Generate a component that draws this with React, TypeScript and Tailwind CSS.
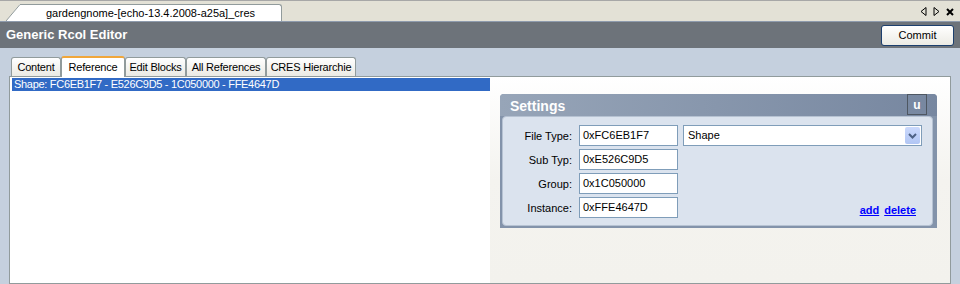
const font = { fontFamily: '"Liberation Sans", Arial, sans-serif' }

const tabs = [
  { label: 'Content', w: 'w-[50px]' },
  { label: 'Reference', w: 'w-[64px]', active: true },
  { label: 'Edit Blocks', w: 'w-[61px]' },
  { label: 'All References', w: 'w-[80px]' },
  { label: 'CRES Hierarchie', w: 'w-[90px]' },
]

const fields = [
  { label: 'File Type:', value: '0xFC6EB1F7' },
  { label: 'Sub Typ:', value: '0xE526C9D5' },
  { label: 'Group:', value: '0x1C050000' },
  { label: 'Instance:', value: '0xFFE4647D' },
]

function DocTabBar() {
  return (
    <div className="flex h-[22px] items-end justify-between border-t border-b border-t-[#a7a7a7] border-b-[#8e9bad] bg-[#e3e1d6]">
      <div className="ml-[6px] flex items-end">
        <svg width="14" height="17" viewBox="0 0 14 17" className="block">
          <polygon points="0,17 14,0 14,17" fill="#ffffff" />
          <line x1="0" y1="17" x2="14" y2="0.5" stroke="#919b9c" strokeWidth="1" />
        </svg>
        <div className="flex h-[17px] w-[262px] items-center justify-center rounded-tr-[3px] border-t border-r border-[#919b9c] bg-white text-[11px] text-black">
          gardengnome-[echo-13.4.2008-a25a]_cres
        </div>
      </div>
      <div className="mr-[6px] mb-[5px] flex items-center gap-[6px]">
        <svg width="7" height="9" viewBox="0 0 7 9">
          <polygon points="6,0.5 1,4.5 6,8.5" fill="none" stroke="#000" strokeWidth="1" />
        </svg>
        <svg width="7" height="9" viewBox="0 0 7 9">
          <polygon points="1,0.5 6,4.5 1,8.5" fill="none" stroke="#000" strokeWidth="1" />
        </svg>
        <svg width="8" height="8" viewBox="0 0 8 8">
          <path d="M1 1 L7 7 M7 1 L1 7" stroke="#000" strokeWidth="2" />
        </svg>
      </div>
    </div>
  )
}

function Header() {
  return (
    <div className="flex h-[26px] items-center justify-between bg-[#6d737a] pl-[6px] pr-[6px]">
      <span className="text-[13px] font-bold text-white">Generic Rcol Editor</span>
      <button className="h-[21px] w-[73px] rounded-[3px] border border-[#1c3f6e] bg-gradient-to-b from-white to-[#ecebe4] text-[11px] text-black">
        Commit
      </button>
    </div>
  )
}

function TabStrip() {
  return (
    <div className="flex items-end pl-[11px] pt-[8px]">
      {tabs.map((t) =>
        t.active ? (
          <div
            key={t.label}
            className={`relative z-10 -mb-px flex h-[21px] ${t.w} items-center justify-center rounded-t-[3px] border border-b-0 border-[#919b9c] border-t-[2px] border-t-[#f0a63a] bg-white text-[11px] tracking-[-0.2px] text-black`}
          >
            {t.label}
          </div>
        ) : (
          <div
            key={t.label}
            className={`flex h-[19px] ${t.w} items-center justify-center rounded-t-[3px] border border-b-0 border-[#919b9c] bg-gradient-to-b from-white to-[#ebeae4] pt-[1px] text-[11px] tracking-[-0.2px] text-black`}
          >
            {t.label}
          </div>
        )
      )}
    </div>
  )
}

function Settings() {
  return (
    <div className="w-[437px] rounded-t-[4px] bg-[#8393aa] pb-[2px] pl-[2px] pr-[4px]">
      <div className="-ml-[2px] -mr-[4px] flex h-[22px] items-start justify-between rounded-t-[4px] bg-gradient-to-r from-[#97a5b8] to-[#7787a0] pl-[10px] pr-[10px]">
        <span className="mt-[2px] text-[14px] font-bold text-white">Settings</span>
        <div className="flex h-[21px] w-[20px] items-center justify-center border border-[#4e5762] text-[12px] font-bold text-white">
          u
        </div>
      </div>
      <div className="rounded-[4px] border border-[#b6c2d2] bg-[#dbe3ee] pb-[7px] pt-[8px]">
        <div className="flex flex-col gap-[3px]">
          {fields.map((f, i) => (
            <div key={f.label} className="flex h-[21px] items-center">
              <span className="w-[69px] shrink-0 pt-[2px] text-right text-[11px] text-black">{f.label}</span>
              <div className="ml-[7px] flex h-[21px] w-[99px] shrink-0 items-center border border-[#7f9db9] bg-white pl-[3px] text-[11px] text-black">
                {f.value}
              </div>
              {i === 0 && (
                <div className="ml-[5px] flex h-[21px] w-[239px] shrink-0 items-center justify-between border border-[#7f9db9] bg-white pl-[4px] pr-[1px] text-[11px] text-black">
                  <span>Shape</span>
                  <div className="flex h-[17px] w-[15px] items-center justify-center rounded-[2px] bg-gradient-to-b from-[#cbd9fc] to-[#b1c6f4]">
                    <svg width="9" height="6" viewBox="0 0 9 6">
                      <path d="M1 1 L4.5 4.5 L8 1" fill="none" stroke="#4d6185" strokeWidth="2" />
                    </svg>
                  </div>
                </div>
              )}
              {i === 3 && (
                <div className="ml-auto mr-[16px] flex gap-[5px] self-end text-[11px] font-bold text-[#0000ff] underline">
                  <span>add</span>
                  <span>delete</span>
                </div>
              )}
            </div>
          ))}
        </div>
      </div>
    </div>
  )
}

export default function App() {
  return (
    <div className="flex h-[284px] w-[960px] flex-col overflow-hidden bg-[#c5d0de]" style={font}>
      <DocTabBar />
      <Header />
      <TabStrip />
      <div className="ml-[9px] flex w-[942px] flex-1 border border-[#919b9c] bg-white">
        <div className="w-[480px] pl-[2px] pt-px">
          <div className="h-[13px] bg-[#316ac5] pl-[2px] text-[11px] leading-[13px] tracking-[-0.3px] text-white">
            Shape: FC6EB1F7 - E526C9D5 - 1C050000 - FFE4647D
          </div>
        </div>
        <div className="flex-1 bg-gradient-to-b from-white via-[#f4f3ef] to-[#f3f2ed] pl-[10px] pt-[17px]">
          <Settings />
        </div>
      </div>
    </div>
  )
}
